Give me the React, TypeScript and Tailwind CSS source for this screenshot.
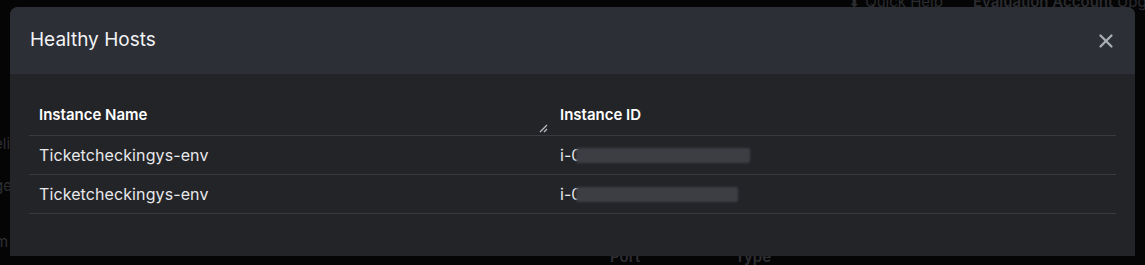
import { X } from "lucide-react";

const hosts = [
  { name: "Ticketcheckingys-env", idWidth: 174 },
  { name: "Ticketcheckingys-env", idWidth: 162 },
];

export default function App() {
  return (
    <div className="relative h-[265px] w-[1145px] overflow-hidden bg-[#050506] font-['Inter',sans-serif]">
      {/* dimmed page behind the dialog */}
      <div className="absolute left-[848px] top-[-9px] flex gap-[30px] whitespace-nowrap text-[15px] text-[#2b2c2f]">
        <span>⬇ Quick Help</span>
        <span className="font-semibold">
          Evaluation Account <span className="font-normal">Upgrade</span>
        </span>
      </div>
      <div className="absolute left-[-6px] top-[133px] text-[15px] text-[#2e2f33]">eli</div>
      <div className="absolute left-[-6px] top-[175px] text-[15px] text-[#2e2f33]">ge</div>
      <div className="absolute left-[-5px] top-[231px] text-[15px] text-[#2e2f33]">m</div>
      <div className="absolute left-[610px] top-[246px] text-[15px] font-semibold text-[#2e2f33]">Port</div>
      <div className="absolute left-[735px] top-[246px] text-[15px] font-semibold text-[#2e2f33]">Type</div>

      {/* dialog */}
      <div className="absolute left-[10px] top-[7px] flex h-[249px] w-[1125px] flex-col overflow-hidden rounded-t-[8px] bg-[#232428]">
        <div className="flex h-[67px] items-center justify-between bg-[#2d2f37] pl-[20px] pr-[18px]">
          <h2 className="text-[19px] font-normal text-[#f2f3f5]">Healthy Hosts</h2>
          <X className="h-[22px] w-[22px] text-[#a9adb5]" strokeWidth={2.5} />
        </div>

        <div className="px-[19px] pt-[21px]">
          <table className="w-full border-collapse text-left">
            <thead>
              <tr className="h-[40px] border-b border-[#393a40]">
                <th className="relative w-[521px] pl-[10px] text-[15px] font-semibold text-white">
                  Instance Name
                  <svg
                    className="absolute bottom-[2px] right-[2px]"
                    width="9"
                    height="9"
                    viewBox="0 0 9 9"
                    fill="none"
                    stroke="#b9bcc2"
                    strokeWidth="1.3"
                  >
                    <path d="M1 8L8 1M5 8L8 5" />
                  </svg>
                </th>
                <th className="pl-[10px] text-[15px] font-semibold text-white">Instance ID</th>
              </tr>
            </thead>
            <tbody>
              {hosts.map((h, i) => (
                <tr key={i} className="h-[39px] border-b border-[#393a40]">
                  <td className="pl-[10px] pt-[1px] text-[16px] tracking-[0.1px] text-[#e8e9eb]">{h.name}</td>
                  <td className="pl-[10px] pt-[1px] text-[16px] text-[#e8e9eb]">
                    <div className="flex items-center">
                      <span>i-0</span>
                      <span
                        className="ml-[-5px] inline-block h-[15px] rounded-[2px] bg-[#3d3e44] blur-[0.8px]"
                        style={{ width: h.idWidth }}
                      />
                    </div>
                  </td>
                </tr>
              ))}
            </tbody>
          </table>
        </div>
      </div>
    </div>
  );
}
